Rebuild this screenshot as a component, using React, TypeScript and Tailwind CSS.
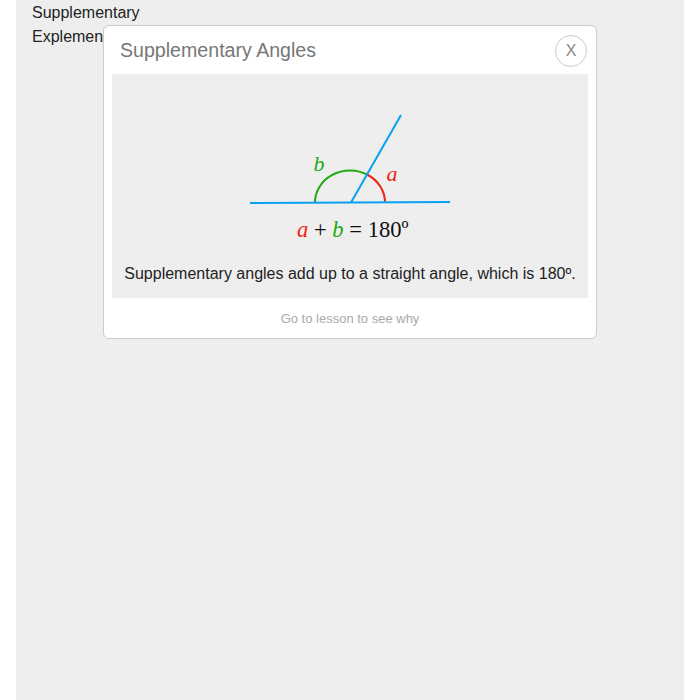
import React from 'react';

const AngleDiagram: React.FC = () => {
  return (
    <svg width="220" height="150" viewBox="0 0 220 150" className="block mx-auto">
      <path d="M75 102.5 A35 32 0 0 1 127 74.5" fill="none" stroke="#22aa11" strokeWidth="2" />
      <path d="M127 74.5 A35 32 0 0 1 145 102.5" fill="none" stroke="#ee2211" strokeWidth="2" />
      <line x1="10" y1="103" x2="210" y2="102" stroke="#0aa0f0" strokeWidth="2" />
      <line x1="111" y1="102.5" x2="161" y2="15" stroke="#0aa0f0" strokeWidth="2" />
      <text
        x="79"
        y="71"
        textAnchor="middle"
        fill="#22aa11"
        fontStyle="italic"
        fontSize="22"
        fontFamily="'Liberation Serif', serif"
      >
        b
      </text>
      <text
        x="152"
        y="81"
        textAnchor="middle"
        fill="#ee2211"
        fontStyle="italic"
        fontSize="22"
        fontFamily="'Liberation Serif', serif"
      >
        a
      </text>
      <text x="57" y="137" fontSize="22.6" fontFamily="'Liberation Serif', serif" fill="#111">
        <tspan fill="#ee2211" fontStyle="italic">a</tspan>
        <tspan> + </tspan>
        <tspan fill="#22aa11" fontStyle="italic">b</tspan>
        <tspan> = 180º</tspan>
      </text>
    </svg>
  );
};

export default function App() {
  return (
    <div className="min-h-[700px] bg-white font-['Liberation_Sans',Arial,sans-serif]">
      <div className="relative mx-[16px] min-h-[700px] bg-[#eeeeee] px-[16px] pt-[1px] text-[16px] leading-[24px] text-[#222]">
        <div>Supplementary</div>
        <div>Explementary</div>

        <div className="absolute left-[87px] top-[25px] w-[494px] rounded-[6px] border border-[#cccccc] bg-white">
          <div className="flex h-[48px] items-center justify-between pl-[16px] pr-[9px]">
            <span className="text-[19.6px] text-[#777777]">Supplementary Angles</span>
            <button className="mt-[1px] flex h-[32px] w-[32px] items-center justify-center rounded-full border border-[#cccccc] text-[16px] text-[#888888]">
              X
            </button>
          </div>
          <div className="mx-[8px] bg-[#eeeeee] pt-[26px] pb-[13px]">
            <AngleDiagram />
            <p className="mt-[12px] mb-[-1px] text-center text-[16px] leading-[24px] text-[#222]">
              Supplementary angles add up to a straight angle, which is 180º.
            </p>
          </div>
          <div className="flex h-[40px] items-center justify-center pt-[2px] text-[13px] text-[#aaaaaa]">
            Go to lesson to see why
          </div>
        </div>
      </div>
    </div>
  );
}
